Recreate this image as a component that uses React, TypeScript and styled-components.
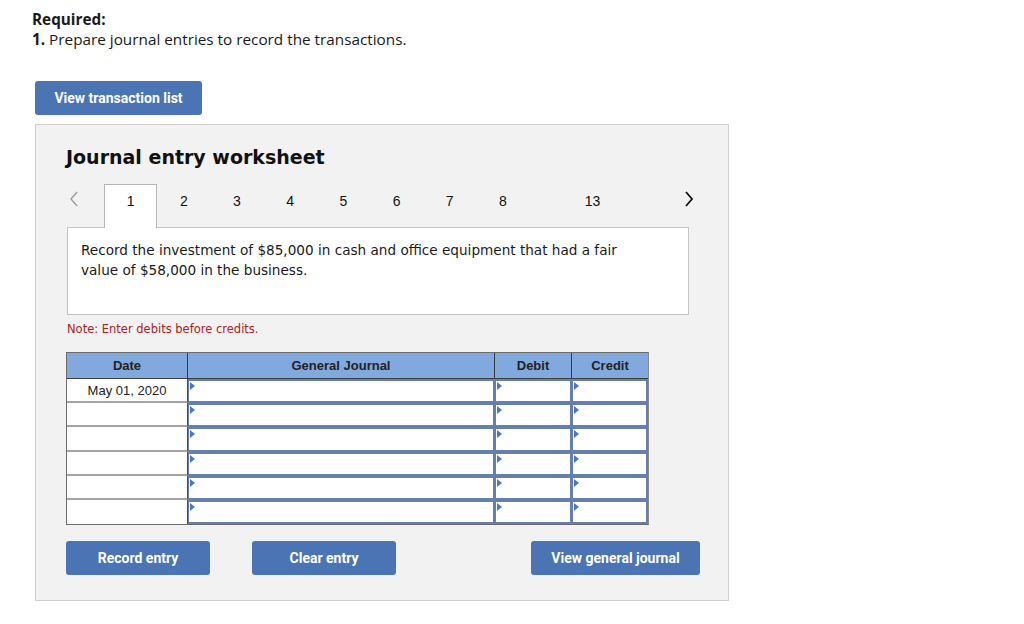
import React from "react";
import styled, { createGlobalStyle } from "styled-components";

const GlobalStyle = createGlobalStyle`
  body {
    margin: 0;
    background: #ffffff;
    font-family: "Open Sans", "Liberation Sans", sans-serif;
    color: #1a1a1a;
  }
`;

const Page = styled.div`
  padding: 9px 0 0 32px;
  width: 1024px;
  box-sizing: border-box;
`;

const Required = styled.div`
  font-size: 15.3px;
  line-height: 20px;
  font-weight: 700;
`;

const Prompt = styled.div`
  font-size: 15.3px;
  line-height: 20px;
  b { font-weight: 700; }
`;

const BlueButton = styled.button<{ $w: number }>`
  width: ${(p) => p.$w}px;
  height: 34px;
  background: #4a74b4;
  color: #fff;
  border: none;
  border-radius: 3px;
  font-family: "Roboto", "Liberation Sans", sans-serif;
  font-weight: 700;
  font-size: 14px;
  padding: 0;
  cursor: pointer;
`;

const TopButtonRow = styled.div`
  margin: 32px 0 0 3px;
`;

const Panel = styled.div`
  margin: 9px 0 0 3px;
  width: 694px;
  height: 477px;
  box-sizing: border-box;
  background: #f2f2f2;
  border: 1px solid #cfcfcf;
  padding: 20px 0 0 30px;
`;

const Title = styled.h2`
  margin: 0;
  font-family: "DejaVu Sans", Verdana, sans-serif;
  font-size: 19px;
  line-height: 24px;
  font-weight: 700;
  color: #111;
`;

const TabRow = styled.div`
  display: flex;
  margin: 15px 0 0 1px;
  height: 43px;
  align-items: stretch;
`;

const Arrow = styled.div<{ $w: number; $color: string; $align: string }>`
  width: ${(p) => p.$w}px;
  display: flex;
  align-items: center;
  justify-content: ${(p) => p.$align};
  color: ${(p) => p.$color};
  padding: 0 0 13px 2px;
  box-sizing: border-box;
`;

const Tab = styled.div<{ $active?: boolean; $w: number }>`
  width: ${(p) => p.$w}px;
  display: flex;
  align-items: center;
  justify-content: center;
  font-family: "Liberation Sans", Arial, sans-serif;
  font-size: 14px;
  color: #111;
  padding-bottom: 11px;
  box-sizing: border-box;
  background: ${(p) => (p.$active ? "#fff" : "transparent")};
  border: ${(p) => (p.$active ? "1px solid #b5b5b5" : "1px solid transparent")};
  border-bottom: none;
  margin-bottom: ${(p) => (p.$active ? "-1px" : "0")};
  position: relative;
  z-index: 1;
`;

const Description = styled.div`
  margin-left: 1px;
  width: 622px;
  height: 88px;
  box-sizing: border-box;
  background: #fff;
  border: 1px solid #c4c4c4;
  padding: 12px 50px 12px 13px;
  font-family: "DejaVu Sans", Verdana, sans-serif;
  font-size: 13.6px;
  line-height: 20px;
  color: #1a1a1a;
`;

const Note = styled.div`
  margin: 7px 0 0 1px;
  font-family: "DejaVu Sans", Verdana, sans-serif;
  font-size: 11.5px;
  line-height: 14px;
  color: #b0201e;
`;

const Table = styled.div`
  margin-top: 16px;
  width: 583px;
  border: 1px solid #6b6b6b;
  border-right-color: #8a8a8a;
  box-sizing: border-box;
`;

const cols = "121px 307px 77px 76px";

const HeaderRow = styled.div`
  display: grid;
  grid-template-columns: ${cols};
  height: 25px;
  background: #82a9de;
  border-bottom: 1px solid #3f3f3f;
`;

const HeadCell = styled.div<{ $last?: boolean }>`
  display: flex;
  align-items: center;
  justify-content: center;
  font-family: "Liberation Sans", Arial, sans-serif;
  font-weight: 700;
  font-size: 13px;
  color: #222;
  border-right: ${(p) => (p.$last ? "none" : "1px solid #3a3a3a")};
`;

const BodyRow = styled.div`
  display: grid;
  grid-template-columns: ${cols};
  height: 24.2px;
`;

const DateCell = styled.div<{ $last?: boolean }>`
  display: flex;
  align-items: center;
  justify-content: center;
  background: #fff;
  font-family: "Liberation Sans", Arial, sans-serif;
  font-size: 13px;
  color: #222;
  border-right: 1px solid #4a4a4a;
  border-bottom: ${(p) => (p.$last ? "none" : "2px solid #a3a3a3")};
  box-sizing: border-box;
`;

const InputCell = styled.div`
  position: relative;
  background: #fff;
  border: 2px solid #6580b0;
  border-left-width: 1px;
  box-sizing: border-box;
`;

const Marker = styled.span`
  position: absolute;
  top: 1px;
  left: 1px;
  width: 0;
  height: 0;
  border-top: 4px solid transparent;
  border-bottom: 4px solid transparent;
  border-left: 5px solid #4a78c8;
`;

const ButtonRow = styled.div`
  display: flex;
  margin-top: 16px;
  width: 634px;
  gap: 42px;
`;

const Spacer = styled.div`
  flex: 1;
`;

const Chevron = ({ dir }: { dir: "left" | "right" }) => (
  <svg width="10" height="16" viewBox="0 0 10 16">
    <path
      d={dir === "left" ? "M8 1 L2 8 L8 15" : "M2 1 L8 8 L2 15"}
      fill="none"
      stroke="currentColor"
      strokeWidth={dir === "left" ? 1.3 : 1.8}
    />
  </svg>
);

const tabs = ["1", "2", "3", "4", "5", "6", "7", "8"];
const rows = ["May 01, 2020", "", "", "", "", ""];

export default function App() {
  return (
    <Page>
      <GlobalStyle />
      <Required>Required:</Required>
      <Prompt>
        <b>1.</b> Prepare journal entries to record the transactions.
      </Prompt>
      <TopButtonRow>
        <BlueButton $w={167}>View transaction list</BlueButton>
      </TopButtonRow>
      <Panel>
        <Title>Journal entry worksheet</Title>
        <TabRow>
          <Arrow $w={37} $color="#9a9a9a" $align="flex-start">
            <Chevron dir="left" />
          </Arrow>
          {tabs.map((t, i) => (
            <Tab key={t} $w={53.2} $active={i === 0}>
              {t}
            </Tab>
          ))}
          <Tab $w={126}>13</Tab>
          <Arrow $w={64} $color="#111" $align="center">
            <Chevron dir="right" />
          </Arrow>
        </TabRow>
        <Description>
          Record the investment of $85,000 in cash and office equipment that had a fair value of
          $58,000 in the business.
        </Description>
        <Note>Note: Enter debits before credits.</Note>
        <Table>
          <HeaderRow>
            <HeadCell>Date</HeadCell>
            <HeadCell>General Journal</HeadCell>
            <HeadCell>Debit</HeadCell>
            <HeadCell $last>Credit</HeadCell>
          </HeaderRow>
          {rows.map((d, i) => (
            <BodyRow key={i}>
              <DateCell $last={i === rows.length - 1}>{d}</DateCell>
              <InputCell>
                <Marker />
              </InputCell>
              <InputCell>
                <Marker />
              </InputCell>
              <InputCell>
                <Marker />
              </InputCell>
            </BodyRow>
          ))}
        </Table>
        <ButtonRow>
          <BlueButton $w={144}>Record entry</BlueButton>
          <BlueButton $w={144}>Clear entry</BlueButton>
          <Spacer />
          <BlueButton $w={169}>View general journal</BlueButton>
        </ButtonRow>
      </Panel>
    </Page>
  );
}
